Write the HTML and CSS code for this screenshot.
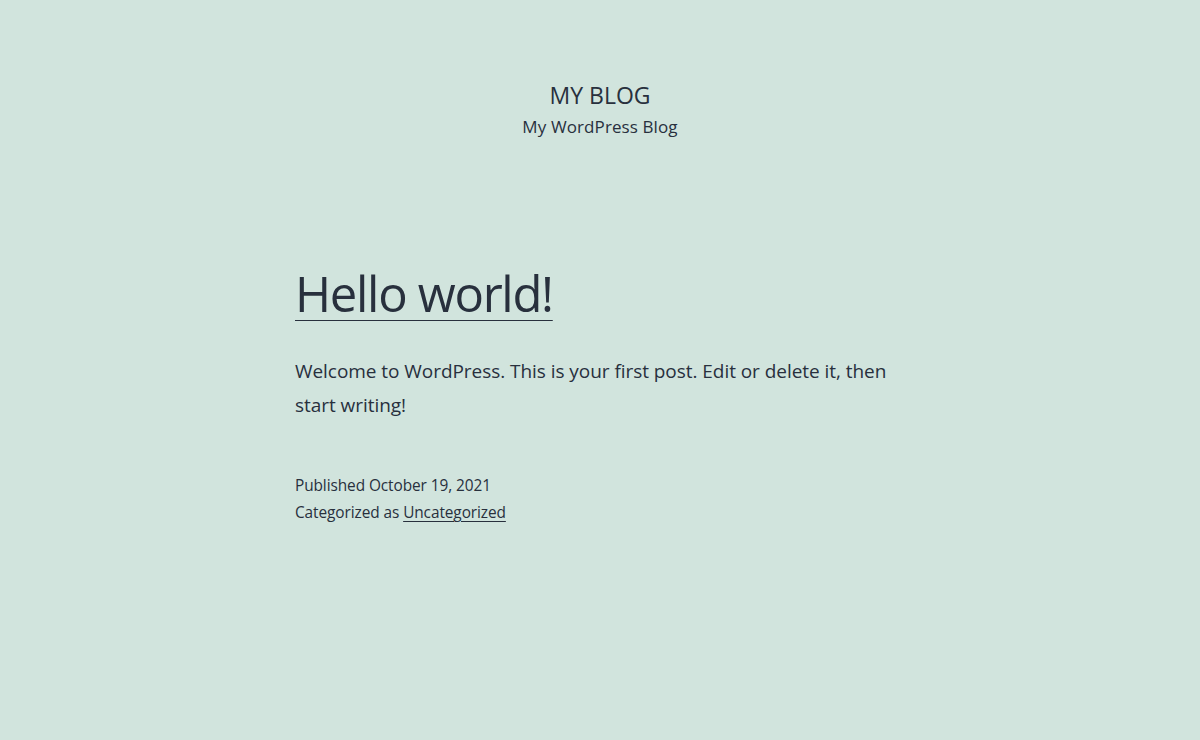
FILE: index.html
```html
<!DOCTYPE html>
<html lang="en">
<head>
<meta charset="utf-8">
<title>My Blog</title>
<link rel="stylesheet" href="styles.css">
</head>
<body>
<header class="site-header">
  <p class="site-title">MY BLOG</p>
  <p class="site-description">My WordPress Blog</p>
</header>
<main class="site-main">
  <article class="post">
    <h2 class="entry-title"><a href="#">Hello world!</a></h2>
    <div class="entry-content">
      <p>Welcome to WordPress. This is your first post. Edit or delete it, then start writing!</p>
    </div>
    <footer class="entry-footer">
      <div>Published October 19, 2021</div>
      <div>Categorized as <a href="#">Uncategorized</a></div>
    </footer>
  </article>
</main>
</body>
</html>
```
FILE: styles.css
```css
html, body {
  margin: 0;
  padding: 0;
}
body {
  background: #d1e4dd;
  color: #28303d;
  font-family: "Open Sans", "Noto Sans", sans-serif;
  min-height: 740px;
}
a {
  color: #28303d;
}
.site-header {
  display: flex;
  flex-direction: column;
  align-items: center;
  padding-top: 78px;
}
.site-title {
  margin: 0;
  font-size: 23px;
  line-height: 34px;
}
.site-description {
  margin: 0;
  font-size: 17px;
  line-height: 30px;
  letter-spacing: 0.1px;
}
.site-main {
  width: 610px;
  margin: 0 auto;
  padding-top: 120px;
}
.entry-title {
  margin: 0;
  font-weight: 400;
  font-size: 49px;
  line-height: 1.3;
  letter-spacing: -1.3px;
}
.entry-title a {
  text-decoration: underline;
  text-decoration-thickness: 1px;
  text-underline-offset: 8px;
}
.entry-content p {
  margin: 28px 0 0;
  font-size: 19px;
  line-height: 34px;
  letter-spacing: -0.05px;
}
.entry-footer {
  margin-top: 50px;
  font-size: 15.4px;
  line-height: 27px;
  letter-spacing: -0.08px;
}
.entry-footer a {
  text-decoration-thickness: 1px;
  text-underline-offset: 3px;
}
```
